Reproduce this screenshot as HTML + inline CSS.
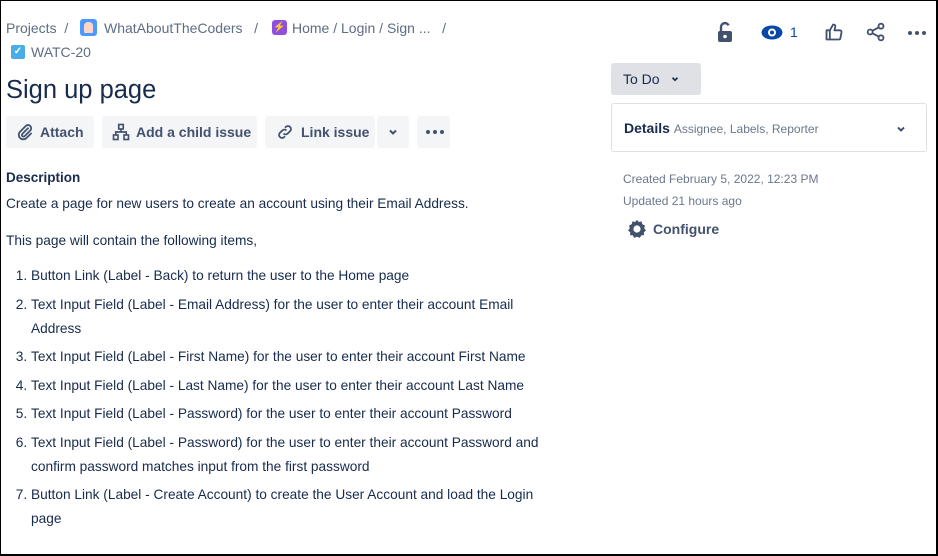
<!DOCTYPE html>
<html><head><style>
*{box-sizing:border-box;margin:0;padding:0}
body{width:938px;height:556px;overflow:hidden;background:#fff;font-family:"Liberation Sans",sans-serif;color:#172b4d;position:relative;border:1px solid #000;border-right:2px solid #000;border-bottom:2px solid #000}
.a{position:absolute;white-space:nowrap}
.bc{color:#5e6c84;font-size:14px}
.btn{position:absolute;top:115px;height:32px;background:#f4f5f7;border-radius:3px;font-size:14px;font-weight:bold;color:#42526e;display:flex;align-items:center;padding-left:10px}
.btn svg{margin-right:6px}
.d{font-size:13.7px;color:#172b4d}
ol{position:absolute;left:12px;top:263px;width:535px;font-size:13.7px;padding-left:18px}
ol li{line-height:24px;margin-bottom:4.5px}
.m{font-size:12px;color:#6b778c}
.dots{display:flex;gap:3px}
.dots i{width:4px;height:4px;border-radius:50%;background:#42526e;display:block}
</style></head><body>
<div class="a bc" style="left:5px;top:19px">Projects &nbsp;/</div>
<div class="a" style="left:79px;top:18px;width:17px;height:17px;background:#4c9aff;border-radius:3px"><div style="margin:3px 4px;width:9px;height:11px;background:#ffd5c8;border-radius:4px 4px 1px 1px"></div></div>
<div class="a bc" style="left:103px;top:19px">WhatAboutTheCoders &nbsp;&nbsp;/</div>
<div class="a" style="left:271px;top:19px;width:15px;height:15px;background:#8d4fe0;border-radius:3px;color:#fff;font-size:10px;text-align:center;line-height:15px">⚡</div>
<div class="a bc" style="left:291px;top:19px">Home / Login / Sign ... &nbsp;&nbsp;/</div>
<div class="a" style="left:10px;top:44px;width:14px;height:14px;background:#4bade8;border-radius:2px;color:#fff;font-size:10px;text-align:center;line-height:14px;font-weight:bold">✓</div>
<div class="a bc" style="left:30px;top:43px">WATC-20</div>
<div class="a" style="left:5px;top:75px;font-size:25.5px;color:#172b4d">Sign up page</div>

<div class="btn" style="left:5px;width:88px"><svg width="18" height="18" viewBox="0 0 24 24" fill="none" stroke="#42526e" stroke-width="2.4" stroke-linecap="round"><path d="M16 7l-7.5 7.5a2 2 0 003 3L19 10a4 4 0 00-6-6L5.5 11.5a6 6 0 008.5 8.5L20 14"/></svg>Attach</div>
<div class="btn" style="left:101px;width:155px"><svg width="18" height="18" viewBox="0 0 24 24" fill="none" stroke="#42526e" stroke-width="2.2"><rect x="9" y="2" width="6" height="6"/><rect x="2" y="16" width="6" height="6"/><rect x="16" y="16" width="6" height="6"/><path d="M12 8v4M5 16v-4h14v4"/></svg>Add a child issue</div>
<div class="btn" style="left:264px;width:110px"><svg width="20" height="18" viewBox="0 0 24 24" fill="none" stroke="#42526e" stroke-width="2.4"><path d="M10 14a4 4 0 005.6 0l3.5-3.5a4 4 0 00-5.6-5.6L12 6.4M14 10a4 4 0 00-5.6 0L4.9 13.5a4 4 0 005.6 5.6L12 17.6"/></svg>Link issue</div>
<div class="btn" style="left:376px;width:32px;padding-left:10px"><svg width="12" height="12" viewBox="0 0 12 12"><path d="M3 4.5l3 3 3-3" stroke="#42526e" stroke-width="2" fill="none"/></svg></div>
<div class="btn" style="left:416px;width:33px;padding-left:9px"><div class="dots"><i></i><i></i><i></i></div></div>

<div class="a" style="left:5px;top:169px;font-size:13.5px;font-weight:bold">Description</div>
<div class="a d" style="left:5px;top:195px">Create a page for new users to create an account using their Email Address.</div>
<div class="a d" style="left:5px;top:232px">This page will contain the following items,</div>
<ol>
<li>Button Link (Label - Back) to return the user to the Home page</li>
<li>Text Input Field (Label - Email Address) for the user to enter their account Email Address</li>
<li>Text Input Field (Label - First Name) for the user to enter their account First Name</li>
<li>Text Input Field (Label - Last Name) for the user to enter their account Last Name</li>
<li>Text Input Field (Label - Password) for the user to enter their account Password</li>
<li>Text Input Field (Label - Password) for the user to enter their account Password and confirm password matches input from the first password</li>
<li>Button Link (Label - Create Account) to create the User Account and load the Login page</li>
</ol>

<svg class="a" style="left:716px;top:20px" width="16" height="22" viewBox="0 0 16 22"><path d="M4 10V6a4 4 0 017.6-1.6" stroke="#42526e" stroke-width="2.4" fill="none"/><rect x="1" y="10" width="14" height="11" rx="2" fill="#42526e"/><circle cx="8" cy="15.5" r="1.8" fill="#fff"/></svg>
<svg class="a" style="left:760px;top:24px" width="22" height="15" viewBox="0 0 22 15"><ellipse cx="11" cy="7.5" rx="10.5" ry="7" fill="#0747a6"/><circle cx="11" cy="7.5" r="4" fill="#fff"/><circle cx="11" cy="7.5" r="2" fill="#0747a6"/></svg>
<div class="a" style="left:789px;top:23px;font-size:14px;color:#0747a6">1</div>
<svg class="a" style="left:823px;top:21px" width="20" height="20" viewBox="0 0 24 24" fill="none" stroke="#42526e" stroke-width="2.2" stroke-linejoin="round"><path d="M3 10h4v11H3zM7 10l4-7c2 0 3 1 2.5 3L12.5 10H19a2 2 0 012 2.3l-1.3 7A2 2 0 0117.7 21H7"/></svg>
<svg class="a" style="left:865px;top:21px" width="20" height="20" viewBox="0 0 24 24" fill="none" stroke="#42526e" stroke-width="2.2"><circle cx="18" cy="5" r="3"/><circle cx="5" cy="12" r="3"/><circle cx="18" cy="19" r="3"/><path d="M7.6 10.6l7.8-4.2M7.6 13.4l7.8 4.2"/></svg>
<div class="a dots" style="left:907px;top:30px"><i></i><i></i><i></i></div>

<div class="a" style="left:610px;top:62px;width:90px;height:32px;background:#dfe1e6;border-radius:3px;font-size:14px;color:#172b4d;padding:8px 0 0 12px">To Do <svg width="12" height="10" viewBox="0 0 12 12" style="margin-left:6px"><path d="M3 4.5l3 3 3-3" stroke="#172b4d" stroke-width="2" fill="none"/></svg></div>
<div class="a" style="left:610px;top:102px;width:316px;height:49px;border:1px solid #dfe1e6;border-radius:3px">
<div class="a" style="left:12px;top:16px;font-size:14px;font-weight:bold;color:#172b4d">Details <span style="font-weight:normal;font-size:12px;color:#6b778c">Assignee, Labels, Reporter</span></div>
<svg class="a" style="left:283px;top:19px" width="12" height="12" viewBox="0 0 12 12"><path d="M3 4.5l3 3 3-3" stroke="#42526e" stroke-width="2" fill="none"/></svg></div>
<div class="a m" style="left:622px;top:171px">Created February 5, 2022, 12:23 PM</div>
<div class="a m" style="left:622px;top:193px">Updated 21 hours ago</div>
<svg class="a" style="left:626px;top:218px" width="20" height="20" viewBox="0 0 24 24"><path fill="#42526e" d="M12 1l2.2 2.6 3.3-.8.8 3.3L21.6 8l-1 3.2 2.2 2.6-2.6 2.2.3 3.4-3.4.3-1.7 2.9L12 21.3l-3.4 1.3L7 19.7l-3.4-.3.3-3.4L1.2 13.8l2.2-2.6L2.4 8l3.3-1.9.8-3.3 3.3.8z"/><circle cx="12" cy="12" r="4.3" fill="#fff"/></svg>
<div class="a" style="left:652px;top:220px;font-size:14px;font-weight:bold;color:#42526e">Configure</div>
</body></html>
